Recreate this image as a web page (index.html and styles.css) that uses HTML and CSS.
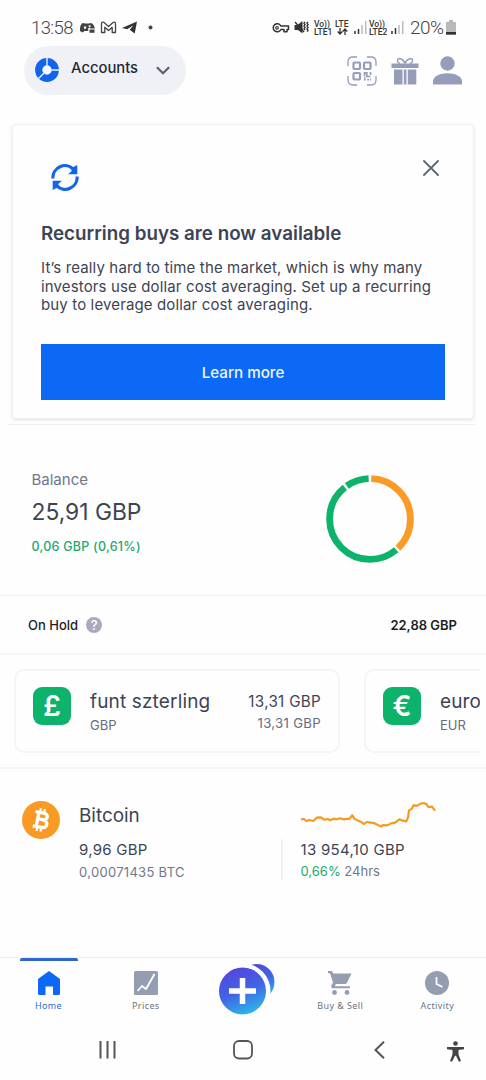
FILE: index.html
```html
<!DOCTYPE html>
<html lang="en">
<head>
<meta charset="utf-8">
<title>Accounts</title>
<link rel="stylesheet" href="styles.css">
</head>
<body>
<div class="screen">
  <div class="status">
    <span class="clock">13:58</span>
    <svg class="notifs" width="76" height="16" viewBox="0 0 76 16">
      <path fill="#444" d="M0 12C-.5 8 1 4.500 3 4l2 .6h4L11 4c2 .7 3.500 3 3.800 5.500h-4.600V9H8.200v3H4.500l-2 1.500zM5 7.200a1.200 1.400 0 1 0 .1 0M9.600 6.200a1 1 0 1 0 .1 0" fill-rule="evenodd"/>
      <path fill="#444" d="M9.500 10.500h5v3.300h-5z"/>
      <path fill="none" stroke="#444" stroke-width="1.300" stroke-linejoin="round" d="M21.500 13.500V4.500c0-1.300 1.600-1.800 2.500-1l4.500 4 4.500-4c1-.8 2.500-.3 2.500 1v9h-3.300V8.300L28.500 11.500l-3.700-3.200v5.200z"/>
      <path fill="#333" d="M42 9 57 2.500l-2.300 12-5-3.700 3.700-4.500-6.200 4z"/>
      <circle cx="70.500" cy="8.500" r="2" fill="#444"/>
    </svg>
    <svg class="key" width="18" height="12" viewBox="0 0 18 12"><path fill="none" stroke="#333" stroke-width="1.500" stroke-linejoin="round" d="M8.800 4H16.500v3.500H15v2.300h-3V7.500H8.800A4 4 0 1 1 8.800 4z"/><circle cx="5" cy="5.800" r="1.300" fill="none" stroke="#333" stroke-width="1.200"/></svg>
    <svg class="mute" width="15" height="15" viewBox="0 0 15 15"><path fill="#333" d="M.5 5h3l5-4v12.500L4 10H.5z"/><path stroke="#333" stroke-width="1.400" fill="none" d="M1 2l9 10M11 2l-1 1.300 1 1.300-1 1.400 1 1.400-1 1.400 1 1.400M14 2l-1 1.300 1 1.300-1 1.400 1 1.400-1 1.400 1 1.400-1 1.400"/></svg>
    <span class="net volte1">Vo))<br>LTE1</span>
    <span class="net lte">LTE<svg width="11" height="7" viewBox="0 0 11 7"><path stroke="#333" stroke-width="1.300" fill="none" d="M3 0v5.500M.7 3.500 3 6l2.300-2.500M8 7V1.500M5.700 3.500 8 1l2.300 2.500"/></svg></span>
    <svg class="sig1" width="13" height="13" viewBox="0 0 13 13"><path stroke="#333" stroke-width="1.500" d="M1 13v-3M4.500 13V8"/><path stroke="#bbb" stroke-width="1.500" d="M8 13V4M11.700 13V0"/></svg>
    <span class="net volte2">Vo))<br>LTE2</span>
    <svg class="sig2" width="13" height="13" viewBox="0 0 13 13"><path stroke="#333" stroke-width="1.500" d="M1 13v-3M4.500 13V7"/><path stroke="#bbb" stroke-width="1.500" d="M8 13V4M11.700 13V0"/></svg>
    <span class="pct">20%</span>
    <svg class="batt" width="10" height="15" viewBox="0 0 10 15"><path fill="#b9b9b9" d="M0 2h3V0h4v2h3v13H0z"/><path fill="#333" d="M0 12h10v2.500H0z"/></svg>
  </div>

  <header class="header">
    <div class="switcher">
      <svg width="24" height="24" viewBox="0 0 24 24"><circle cx="12" cy="12" r="8.300" fill="#f8f8fc" stroke="#1264eb" stroke-width="7.200"/><path stroke="#f0f1f7" stroke-width="1.400" d="M12 0v7.500M16.500 12H24M8.800 15.200 3.500 20.500"/></svg>
      <span class="switcher-label">Accounts</span>
      <svg class="chev" width="14" height="9" viewBox="0 0 14 9"><path fill="none" stroke="#5b616e" stroke-width="2.300" d="m.9 1.200 6.100 6 6.100-6"/></svg>
    </div>
    <svg class="qr" width="30" height="30" viewBox="0 0 30 30" fill="none" stroke="#959db8">
      <path stroke-width="1.300" d="M1 10V6q0-5 5-5h4M20 1h4q5 0 5 5v4M29 20v4q0 5-5 5h-4M10 29H6q-5 0-5-5v-4"/>
      <g stroke-width="2.200"><rect x="6.500" y="6.500" width="6.500" height="6.500" rx="1"/><rect x="17" y="6.500" width="6.500" height="6.500" rx="1"/><rect x="6.500" y="17" width="6.500" height="6.500" rx="1"/></g>
      <path stroke-width="1.700" d="M17.500 20v-3.200h2.300v3.700h3.700M23.500 16v3M17 23.700h1.700M20.200 23.700H22M23 23.700h1.200M17 21.700h1.500"/>
    </svg>
    <svg class="gift" width="28" height="28" viewBox="0 0 28 28"><path fill="#959db8" d="M.5 6.500h27V11h-27zM3 12.500h8.500v15H3zM12.800 12.500h2.700v15h-2.700zM16.800 12.500h8.500v15h-8.500z"/><path fill="none" stroke="#959db8" stroke-width="1.500" d="M14 6.500C12 1 6 0 6.500 4q.3 2 2.500 2.500M14 6.500C16 1 22 0 21.500 4q-.3 2-2.500 2.500"/></svg>
    <svg class="person" width="29" height="29" viewBox="0 0 29 29" fill="#959db8"><circle cx="14.500" cy="7.500" r="7.200"/><path d="M0 28.500v-3.800C1 20 7 17.300 14.500 17.300S28 20 29 24.700v3.800z"/></svg>
  </header>

  <section class="promo">
    <div class="promo-top">
      <svg class="recur" width="28" height="29" viewBox="0 0 28 29"><path fill="none" stroke="#1264eb" stroke-width="3.200" d="M1.900 15.500A12 12 0 0 1 22.500 6.300M26.100 13.500A12 12 0 0 1 5.500 22.700"/><path fill="#1264eb" d="M26.300 2v9.300H17l3.300-2.900 1-4zM1.700 27v-9.300H11l-3.300 2.900-1 4z"/></svg>
      <svg class="close" width="16" height="16" viewBox="0 0 16 16"><path stroke="#5b6b78" stroke-width="1.900" stroke-linecap="round" d="m1 1 14 14M15 1 1 15"/></svg>
    </div>
    <h1 class="promo-title">Recurring buys are now available</h1>
    <p class="promo-text">It’s really hard to time the market, which is why many<br>investors use dollar cost averaging. Set up a recurring<br>buy to leverage dollar cost averaging.</p>
    <div class="promo-btn">Learn more</div>
  </section>
  <div class="short-rule"></div>

  <section class="balance">
    <div class="balance-text">
      <div class="balance-label">Balance</div>
      <div class="balance-value">25,91 GBP</div>
      <div class="balance-change">0,06 GBP (0,61%)</div>
    </div>
    <svg class="donut" width="88" height="88" viewBox="0 0 88 88" fill="none" stroke-width="6.800">
      <g transform="rotate(-90 44 44)">
        <circle cx="44" cy="44" r="40.400" pathLength="360" stroke="#fb9a27" stroke-dasharray="134.500 225.500" stroke-dashoffset="-1.800"/>
        <circle cx="44" cy="44" r="40.400" pathLength="360" stroke="#0db26b" stroke-dasharray="182 178" stroke-dashoffset="-139.500"/>
        <circle cx="44" cy="44" r="40.400" pathLength="360" stroke="#0db26b" stroke-dasharray="33 327" stroke-dashoffset="-325"/>
      </g>
    </svg>
  </section>

  <section class="hold">
    <span>On Hold</span>
    <span class="help">?</span>
    <span class="hold-value">22,88 GBP</span>
  </section>

  <section class="wallets">
    <div class="wallet wallet-main">
      <div class="coin">£</div>
      <div class="wallet-name"><div class="name">funt szterling</div><div class="code">GBP</div></div>
      <div class="wallet-sum"><div class="sum">13,31 GBP</div><div class="sub">13,31 GBP</div></div>
    </div>
    <div class="wallet wallet-next">
      <div class="coin">€</div>
      <div class="wallet-name"><div class="name">euro</div><div class="code">EUR</div></div>
    </div>
  </section>

  <section class="asset">
    <svg class="btc" width="38" height="38" viewBox="0 0 38 38"><circle cx="19" cy="19" r="19" fill="#f99a25"/><g transform="rotate(11 19 19)" fill="none" stroke="#fff"><path stroke-width="3.300" d="M15.500 10.500v17M12 11.700h8.500c5.500 0 5.500 6.600 0 6.600h-5M20.500 18.500c6.700 0 6.700 7.800 0 7.800H12"/><path stroke-width="2.200" d="M16.700 7.500v4M20.700 7.500v4M16.700 26.500v4M20.700 26.500v4"/></g></svg>
    <div class="asset-left">
      <div class="asset-name">Bitcoin</div>
      <div class="asset-fiat">9,96 GBP</div>
      <div class="asset-crypto">0,00071435 BTC</div>
    </div>
    <div class="asset-right">
      <svg class="spark" width="138" height="30" viewBox="900 45 414 90"><path fill="none" stroke="#f5991f" stroke-width="6.500" stroke-linejoin="round" d="M903 103 912 102 919 108 928 105 940 108 950 98 963 97 972 104 984 102 990 106 1001 101 1010 103 1020 100 1032 103 1048 101 1057 91 1063 101 1074 107 1082 110 1092 117 1100 111 1112 113 1122 114 1132 119 1143 125 1150 120 1162 121 1173 115 1185 113 1198 103 1208 107 1219 109 1224 98 1227 76 1236 71 1240 61 1252 62 1262 56 1271 54 1280 58 1285 66 1296 65 1305 77"/></svg>
      <div class="quote">
        <div class="quote-price">13 954,10 GBP</div>
        <div class="quote-change"><span class="up">0,66%</span> 24hrs</div>
      </div>
    </div>
  </section>

  <nav class="tabs">
    <div class="tab tab-on"><svg width="24" height="26" viewBox="0 0 24 26"><path fill="#0b69f5" d="m12 1 11 8v14.500q0 1.500-1.500 1.500H16v-8.500H8.500V25h-6Q1 25 1 23.500V9z"/></svg><span>Home</span></div>
    <div class="tab"><svg width="24" height="26" viewBox="0 0 24 26"><rect y="1" width="24" height="24" rx="1.500" fill="#959db0"/><path fill="none" stroke="#fff" stroke-width="1.800" stroke-linejoin="round" d="m3.500 21 4.500-5 4 3 4-7 4.500-8"/></svg><span>Prices</span></div>
    <div class="tab tab-plus"><svg width="56" height="52" viewBox="0 0 56 52"><defs><linearGradient id="plusFill" x1="0.300" y1="0" x2="0.700" y2="1"><stop offset="0" stop-color="#5345de"/><stop offset=".5" stop-color="#4264e4"/><stop offset="1" stop-color="#2bbbe9"/></linearGradient></defs><circle cx="37.500" cy="19" r="18" fill="url(#plusFill)"/><circle cx="24" cy="28" r="27.500" fill="#fefefe"/><circle cx="23.500" cy="28" r="23.500" fill="url(#plusFill)"/><path stroke="#fff" stroke-width="5.500" d="M23.500 15v26M10 28h27"/></svg></div>
    <div class="tab"><svg width="24" height="26" viewBox="0 0 24 26" fill="#959db0"><path d="M0 1h4l1.200 2.500H23.500l-4.500 9.300q-.7 1.200-2 1.200H8l-1.300 2.300H22v2H5q-2.500-.5-1.500-3L5 12.500 2 3.300H0z"/><circle cx="6.500" cy="22.500" r="2.400"/><circle cx="19" cy="22.500" r="2.400"/></svg><span>Buy &amp; Sell</span></div>
    <div class="tab"><svg width="24" height="26" viewBox="0 0 24 26"><circle cx="12" cy="13" r="12" fill="#959db0"/><path fill="none" stroke="#fff" stroke-width="1.700" d="M11.500 7v7l6 3"/></svg><span>Activity</span></div>
  </nav>

  <footer class="sysnav">
    <svg class="recents" width="18" height="18" viewBox="0 0 18 18"><path stroke="#555" stroke-width="2" d="M1.500 0v17.500M8.500 0v17.500M15.500 0v17.500"/></svg>
    <svg class="home" width="20" height="20" viewBox="0 0 20 20"><rect x="1" y="1" width="18" height="17.500" rx="5" fill="none" stroke="#555" stroke-width="1.800"/></svg>
    <svg class="back" width="11" height="18" viewBox="0 0 11 18"><path fill="none" stroke="#555" stroke-width="2" d="M10 .7 1.500 9l8.500 8.300"/></svg>
    <svg class="access" width="17" height="21" viewBox="0 0 17 21" fill="#444"><circle cx="8.500" cy="2.500" r="2.300"/><path d="M0 6h17v2.200l-5.500.8v4.500L14 20l-2 .8-3-6h-1l-3 6-2-.8 2.500-6.500V9L0 8.200z"/></svg>
  </footer>
</div>
</body>
</html>
```
FILE: styles.css
```css
* { box-sizing: border-box; }
body { margin: 0; background: #fefefe; font-family: Inter, "Liberation Sans", sans-serif; color: #3d4454; }
.screen { width: 486px; height: 1080px; overflow: hidden; display: flex; flex-direction: column; }
.screen > * { flex: none; }
svg { display: block; flex: none; }

.status { height: 46px; display: flex; align-items: flex-start; padding: 15px 0 0 31px; font-family: Roboto, sans-serif; color: #444; }
.clock { width: 49px; font-size: 18.500px; line-height: 26px; font-weight: 300; letter-spacing: -.6px; white-space: nowrap; }
.notifs { margin-top: 4px; width: 76px; }
.key { margin: 7px 0 0 116px; }
.mute { margin: 5px 0 0 4px; }
.net { font-size: 8.500px; line-height: 8px; font-weight: 500; color: #333; white-space: nowrap; margin-top: 5px; }
.volte1 { margin-left: 5px; width: 18px; }
.lte { margin-left: 3px; width: 15px; }
.lte svg { margin: 0 0 0 2px; }
.sig1 { margin: 6px 0 0 4px; }
.volte2 { margin-left: 2px; width: 20px; }
.sig2 { margin: 6px 0 0 2px; }
.pct { margin-left: 6px; width: 36px; font-size: 19px; line-height: 26px; font-weight: 300; letter-spacing: -.6px; }
.batt { margin-top: 5px; }

.header { height: 78px; display: flex; align-items: flex-start; padding-left: 24px; }
.switcher { width: 162px; height: 49px; border-radius: 25px; background: #f0f1f7; display: flex; align-items: flex-start; padding: 12px 0 0 11px; }
.switcher-label { width: 85px; margin-left: 12px; font-size: 14.800px; line-height: 20px; font-weight: 500; color: #252932; }
.chev { margin-top: 8px; }
.qr { margin: 10px 0 0 161px; }
.gift { margin: 11px 0 0 14px; }
.person { margin: 10px 0 0 14px; }

.promo { margin-left: 12px; width: 462px; height: 295px; border: 1px solid #f1f1f3; border-radius: 4px; box-shadow: 0 1px 3px rgba(0,0,0,.13); padding: 34px 28px 0; }
.promo-top { display: flex; justify-content: space-between; height: 63px; }
.recur { margin: 4px 0 0 10px; }
.close { margin: 1px 6px 0 0; }
.promo-title { margin: 0; font-size: 18.800px; line-height: 24px; font-weight: 600; white-space: nowrap; }
.promo-text { margin: 13px 0 0; font-size: 15px; line-height: 18.500px; letter-spacing: .135px; white-space: nowrap; }
.promo-btn { margin-top: 29.500px; height: 56px; line-height: 57px; background: #0b69f5; color: #f1f6ff; text-align: center; font-size: 15.200px; font-weight: 500; }
.short-rule { margin: 5px 10px 0 8px; height: 1px; background: #f0f0f2; }

.balance { height: 171px; border-bottom: 1.500px solid #efeff1; display: flex; align-items: flex-start; padding: 45px 0 0 31.500px; white-space: nowrap; }
.balance-text { width: 294.500px; }
.balance-label { font-size: 15px; line-height: 20px; color: #71778b; }
.balance-value { font-size: 22.800px; line-height: 30px; margin-top: 7px; }
.balance-change { font-size: 12.500px; line-height: 18px; margin-top: 11px; letter-spacing: .25px; color: #1ba970; font-weight: 500; }
.donut { margin-top: 5px; }

.hold { height: 59px; border-bottom: 2px solid #f6f6f7; display: flex; align-items: center; padding: 1px 29px 0 28px; font-size: 13px; font-weight: 500; color: #1d1e22; white-space: nowrap; }
.help { width: 16px; height: 16px; margin-left: 8px; border-radius: 50%; background: #a9aac0; color: #fff; text-align: center; font-size: 13px; line-height: 16px; font-weight: 500; }
.hold-value { margin-left: auto; font-weight: 600; }

.wallets { height: 114px; border-bottom: 2px solid #f5f5f7; display: flex; gap: 24px; padding: 14px 6px 0 14px; overflow: hidden; white-space: nowrap; }
.wallet { height: 84px; border: 2px solid #f5f5f7; border-radius: 10px; flex: none; display: flex; padding: 16px 17px 0; }
.wallet-main { width: 326px; }
.wallet-next { width: 116px; border-right: 0; border-radius: 10px 0 0 10px; overflow: hidden; padding-right: 0; }
.coin { width: 38px; height: 38px; border-radius: 9px; background: #0db26b; color: #fff; font-size: 28px; line-height: 38px; font-weight: 600; text-align: center; flex: none; }
.wallet-name { margin-left: 19px; }
.name { font-size: 19px; line-height: 26px; margin-top: 2px; letter-spacing: .15px; }
.code { font-size: 13px; line-height: 18px; color: #656c80; margin-top: 1px; }
.wallet-sum { margin-left: auto; text-align: right; }
.sum { font-size: 15.200px; line-height: 22px; margin-top: 4px; letter-spacing: .3px; }
.sub { font-size: 13.200px; line-height: 20px; letter-spacing: .3px; color: #656c80; }

.asset { height: 189px; display: flex; align-items: flex-start; padding: 32px 0 0 22px; border-bottom: 1px solid #efeff1; white-space: nowrap; }
.asset-left { margin-left: 19px; width: 202px; }
.asset-name { font-size: 18.900px; line-height: 26px; margin-top: 2px; }
.asset-fiat { font-size: 15px; line-height: 22px; margin-top: 10px; letter-spacing: .25px; }
.asset-crypto { font-size: 13px; line-height: 18px; margin-top: 2px; letter-spacing: .3px; color: #71778b; }
.spark { margin: -1px 0 0 19px; }
.quote { margin-top: 9px; height: 41px; padding-left: 17.500px; border-left: 2px solid #f2f2f4; }
.quote-price { font-size: 15px; line-height: 22px; margin-top: 2px; letter-spacing: .3px; }
.quote-change { font-size: 13px; line-height: 18px; margin-top: 1px; color: #71778b; }
.up { color: #1ba970; }

.tabs { height: 62px; display: grid; grid-template-columns: repeat(5, 1fr); font-family: "Noto Sans", sans-serif; }
.tab { display: flex; flex-direction: column; align-items: center; padding-top: 13px; border-top: 3px solid transparent; font-size: 9px; letter-spacing: .4px; color: #6d7382; white-space: nowrap; }
.tab span { line-height: 14px; margin-top: 3px; }
.tab-on { margin-left: 19.500px; width: 58px; border-color: #2e66cb; border-radius: 2px; color: #2b6fce; }
.tab svg { margin-top: -4px; }
.tab-plus { padding-top: 6px; }
.tab-plus svg { margin-left: 9px; }

.sysnav { height: 59px; display: flex; align-items: flex-start; padding-top: 21px; }
.recents { margin-left: 99px; }
.home { margin-left: 116px; margin-top: -1px; }
.back { margin-left: 121px; }
.access { margin-left: 62px; }
```
